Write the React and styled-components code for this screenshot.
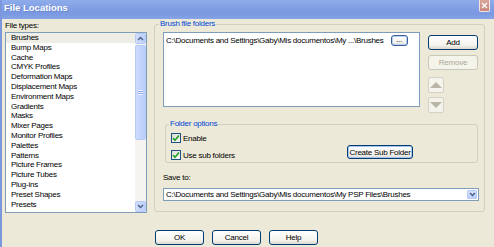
import React from 'react';
import styled, { createGlobalStyle, css } from 'styled-components';

const GlobalStyle = createGlobalStyle`
  html, body {
    margin: 0;
    padding: 0;
    background: #ece9d8;
  }
  body {
    font-family: "Liberation Sans", Arial, sans-serif;
    font-size: 8px;
    letter-spacing: -0.25px;
    color: #000;
  }
`;

const FILE_TYPES = [
  'Brushes',
  'Bump Maps',
  'Cache',
  'CMYK Profiles',
  'Deformation Maps',
  'Displacement Maps',
  'Environment Maps',
  'Gradients',
  'Masks',
  'Mixer Pages',
  'Monitor Profiles',
  'Palettes',
  'Patterns',
  'Picture Frames',
  'Picture Tubes',
  'Plug-ins',
  'Preset Shapes',
  'Presets',
];

const Window = styled.div`
  width: 494px;
  height: 247px;
  box-sizing: border-box;
  overflow: hidden;
  background: #ece9d8;
  border-left: 2px solid #7c97dc;
  display: flex;
  flex-direction: column;
`;

const TitleBar = styled.div`
  height: 19px;
  flex: none;
  display: flex;
  align-items: flex-start;
  padding-left: 2px;
  background: linear-gradient(#8eabeb, #7a98e0 70%, #86a3e6);
`;

const Title = styled.div`
  margin-top: 3px;
  color: #fff;
  font-size: 9.5px;
  font-weight: bold;
  letter-spacing: 0;
  line-height: 10px;
  text-shadow: 1px 1px 0 #6a86cc;
`;

const Close = styled.div`
  margin-left: auto;
  margin-right: 4px;
  width: 11px;
  height: 12px;
  box-sizing: border-box;
  border: 1px solid #f4e4e0;
  border-top: none;
  border-radius: 0 0 2px 2px;
  background: linear-gradient(#d9a49a, #c9857a);
  display: flex;
  align-items: center;
  justify-content: center;
`;

const Main = styled.div`
  display: flex;
  align-items: flex-start;
  padding-left: 3px;
`;

const LeftCol = styled.div`
  width: 142px;
  display: flex;
  flex-direction: column;
`;

const FieldLabel = styled.div`
  line-height: 10px;
  height: 10px;
  margin-top: ${(p) => p.$top || 0}px;
  margin-left: ${(p) => p.$left || 0}px;
`;

const ListBox = styled.div`
  margin-top: 1px;
  height: 181px;
  box-sizing: border-box;
  border: 1px solid #7f9db9;
  background: #fff;
  display: flex;
`;

const Items = styled.div`
  flex: 1;
  padding-top: 0;
`;

const Item = styled.div`
  height: 9.8px;
  line-height: 9.8px;
  padding-left: 5px;
  white-space: nowrap;
  ${(p) =>
    p.$selected &&
    css`
      background: #eeede6;
    `}
`;

const ScrollBar = styled.div`
  width: 11px;
  display: flex;
  flex-direction: column;
  background: #f5f4ef;
`;

const ScrollBtn = styled.div`
  height: 11px;
  box-sizing: border-box;
  border: 1px solid #b7cbf5;
  border-radius: 2px;
  background: linear-gradient(90deg, #d2defd, #bccffb);
  display: flex;
  align-items: center;
  justify-content: center;
`;

const Thumb = styled.div`
  margin-top: 1px;
  height: 95px;
  box-sizing: border-box;
  border: 1px solid #b7cbf5;
  border-radius: 2px;
  background: linear-gradient(90deg, #cddbfd, #b9cdfb);
  display: flex;
  align-items: center;
  justify-content: center;
`;

const Grip = styled.div`
  width: 5px;
  height: 5px;
  background: repeating-linear-gradient(#eef3ff 0 1px, #8ca7e6 1px 2px);
`;

const Track = styled.div`
  flex: 1;
`;

const Group = styled.fieldset`
  margin: 0;
  min-width: 0;
  box-sizing: border-box;
  border: 1px solid #d0d0bf;
  border-radius: 3px;
`;

const MainGroup = styled(Group)`
  margin-left: 7px;
  width: 331px;
  padding: 3px 5px 10px 8px;
`;

const OptionsGroup = styled(Group)`
  margin-top: 6px;
  margin-left: 2px;
  width: 313px;
  padding: 4px 5px 2px 5px;
`;

const Legend = styled.legend`
  color: #0046d5;
  line-height: 10px;
  padding: 0 1px;
  margin-left: ${(p) => p.$shift}px;
`;

const TopRow = styled.div`
  display: flex;
  align-items: flex-start;
`;

const PathList = styled.div`
  width: 257px;
  height: 75px;
  box-sizing: border-box;
  border: 1px solid #7f9db9;
  background: #fff;
`;

const PathRow = styled.div`
  height: 14px;
  display: flex;
  align-items: center;
  padding-left: 2px;
  gap: 7px;
  white-space: nowrap;
`;

const ButtonCol = styled.div`
  margin-left: 8px;
  width: 50px;
  display: flex;
  flex-direction: column;
  align-items: flex-start;
`;

const Button = styled.button`
  box-sizing: border-box;
  width: ${(p) => p.$w || 50}px;
  height: ${(p) => p.$h || 15}px;
  margin-top: ${(p) => p.$top || 0}px;
  padding: 0;
  font: inherit;
  letter-spacing: inherit;
  color: #000;
  border: 1px solid #003c74;
  border-radius: 3px;
  background: linear-gradient(#ffffff, #f4f3ee 70%, #dcd8cc);
  display: flex;
  align-items: center;
  justify-content: center;
  ${(p) =>
    p.$focus &&
    css`
      box-shadow: inset 0 0 0 1px #a8c4f0;
    `}
  &:disabled {
    border-color: #c9c7ba;
    color: #aca899;
    background: #f5f4ea;
  }
`;

const DotsButton = styled(Button)`
  width: 17px;
  height: 11px;
  line-height: 8px;
  align-items: flex-start;
  border-color: #3c5e9c;
  box-shadow: inset 0 0 0 1px #b8d0f4;
`;

const ArrowButton = styled.div`
  width: 16px;
  height: 16px;
  margin-top: ${(p) => p.$top}px;
  box-sizing: border-box;
  border: 1px solid #d4d2c6;
  border-radius: 2px;
  background: #f4f3ec;
  display: flex;
  align-items: center;
  justify-content: center;
`;

const OptionsRow = styled.div`
  display: flex;
  align-items: flex-end;
`;

const CheckCol = styled.div`
  width: 176px;
  display: flex;
  flex-direction: column;
  gap: 7px;
`;

const CheckRow = styled.label`
  display: flex;
  align-items: center;
  height: 10px;
  gap: 2px;
`;

const CheckBox = styled.span`
  width: 10px;
  height: 10px;
  box-sizing: border-box;
  border: 1px solid #1c5180;
  background: linear-gradient(135deg, #dcdcd4, #fbfbf8);
  display: flex;
  align-items: center;
  justify-content: center;
`;

const Combo = styled.div`
  margin-top: 5px;
  width: 316px;
  height: 13px;
  box-sizing: border-box;
  border: 1px solid #7f9db9;
  background: #fff;
  display: flex;
  align-items: center;
  padding-left: 2px;
  white-space: nowrap;
`;

const DropButton = styled.div`
  margin-left: auto;
  margin-right: 1px;
  width: 10px;
  height: 9px;
  box-sizing: border-box;
  border: 1px solid #b7cbf5;
  border-radius: 1px;
  background: linear-gradient(#d6e2fd, #bccffb);
  display: flex;
  align-items: center;
  justify-content: center;
`;

const Footer = styled.div`
  display: flex;
  gap: 8px;
  margin-top: 17px;
  padding-left: 153px;
`;

const Chevron = ({ up }) => (
  <svg width="7" height="5" viewBox="0 0 7 5">
    <path
      d={up ? 'M1 4 L3.5 1.5 L6 4' : 'M1 1 L3.5 3.5 L6 1'}
      fill="none"
      stroke="#4d6185"
      strokeWidth="1.5"
    />
  </svg>
);

const Triangle = ({ up }) => (
  <svg width="12" height="6" viewBox="0 0 12 6">
    <polygon points={up ? '0,6 6,0 12,6' : '0,0 6,6 12,0'} fill="#b9b6a8" />
  </svg>
);

const Check = () => (
  <svg width="8" height="8" viewBox="0 0 8 8">
    <path d="M1 4 L3 6.2 L7 1.5" fill="none" stroke="#21a121" strokeWidth="1.6" />
  </svg>
);

const App = () => (
  <Window>
    <GlobalStyle />
    <TitleBar>
      <Title>File Locations</Title>
      <Close>
        <svg width="7" height="7" viewBox="0 0 7 7">
          <path d="M1 1 L6 6 M6 1 L1 6" stroke="#fff" strokeWidth="1.4" />
        </svg>
      </Close>
    </TitleBar>
    <Main>
      <LeftCol>
        <FieldLabel $top={2}>File types:</FieldLabel>
        <ListBox>
          <Items>
            {FILE_TYPES.map((name, i) => (
              <Item key={name} $selected={i === 0}>
                {name}
              </Item>
            ))}
          </Items>
          <ScrollBar>
            <ScrollBtn>
              <Chevron up />
            </ScrollBtn>
            <Thumb>
              <Grip />
            </Thumb>
            <Track />
            <ScrollBtn>
              <Chevron />
            </ScrollBtn>
          </ScrollBar>
        </ListBox>
      </LeftCol>
      <MainGroup>
        <Legend $shift={-4}>Brush file folders</Legend>
        <TopRow>
          <PathList>
            <PathRow>
              C:\Documents and Settings\Gaby\Mis documentos\My ...\Brushes
              <DotsButton>...</DotsButton>
            </PathRow>
          </PathList>
          <ButtonCol>
            <Button $top={3}>Add</Button>
            <Button $top={5} disabled>
              Remove
            </Button>
            <ArrowButton $top={7}>
              <Triangle up />
            </ArrowButton>
            <ArrowButton $top={4}>
              <Triangle />
            </ArrowButton>
          </ButtonCol>
        </TopRow>
        <OptionsGroup>
          <Legend $shift={-2}>Folder options</Legend>
          <OptionsRow>
            <CheckCol>
              <CheckRow>
                <CheckBox>
                  <Check />
                </CheckBox>
                Enable
              </CheckRow>
              <CheckRow>
                <CheckBox>
                  <Check />
                </CheckBox>
                Use sub folders
              </CheckRow>
            </CheckCol>
            <Button $w={66} $h={14} $focus style={{ marginBottom: 1 }}>
              Create Sub Folder
            </Button>
          </OptionsRow>
        </OptionsGroup>
        <FieldLabel $top={10}>Save to:</FieldLabel>
        <Combo>
          C:\Documents and Settings\Gaby\Mis documentos\My PSP Files\Brushes
          <DropButton>
            <Chevron />
          </DropButton>
        </Combo>
      </MainGroup>
    </Main>
    <Footer>
      <Button $w={49}>OK</Button>
      <Button $w={49}>Cancel</Button>
      <Button $w={49}>Help</Button>
    </Footer>
  </Window>
);

export default App;
